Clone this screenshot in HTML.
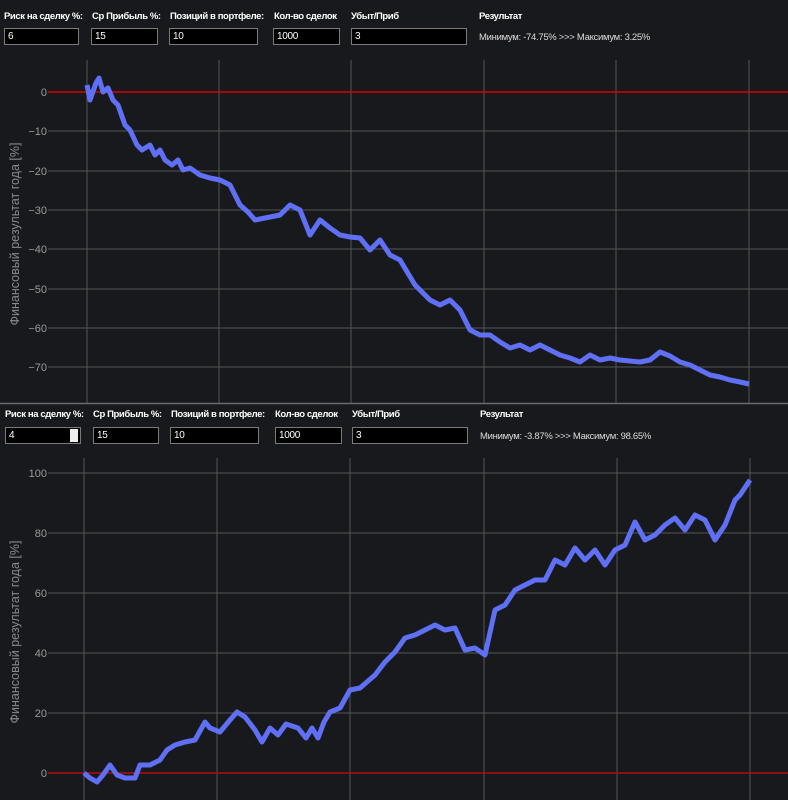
<!DOCTYPE html>
<html><head><meta charset="utf-8"><style>
body{margin:0;width:788px;height:800px;background:#18191d;overflow:hidden;font-family:"Liberation Sans","DejaVu Sans",sans-serif;position:relative}
.l{position:absolute;color:#fff;font-weight:bold;font-size:9.5px;letter-spacing:-0.4px;white-space:nowrap}
.i{position:absolute;background:#000;border:1px solid #7a7a7a;color:#fff;font-size:10px;line-height:15px;padding-left:3px;box-sizing:border-box;height:17px;letter-spacing:-0.3px}
.r{position:absolute;color:#ddd;font-size:9.5px;letter-spacing:-0.3px;white-space:nowrap}
svg{position:absolute;left:0;top:0}
</style></head><body>
<svg width="788" height="800">
<g stroke="#555" stroke-width="1">
<line x1="87" y1="60" x2="87" y2="403"/><line x1="219" y1="60" x2="219" y2="403"/><line x1="351" y1="60" x2="351" y2="403"/><line x1="484" y1="60" x2="484" y2="403"/><line x1="616" y1="60" x2="616" y2="403"/><line x1="749" y1="60" x2="749" y2="403"/>
<line x1="48" y1="131" x2="788" y2="131"/><line x1="48" y1="171" x2="788" y2="171"/><line x1="48" y1="210" x2="788" y2="210"/><line x1="48" y1="249" x2="788" y2="249"/><line x1="48" y1="289" x2="788" y2="289"/><line x1="48" y1="328" x2="788" y2="328"/><line x1="48" y1="367" x2="788" y2="367"/>
<line x1="84" y1="458" x2="84" y2="800"/><line x1="217" y1="458" x2="217" y2="800"/><line x1="350" y1="458" x2="350" y2="800"/><line x1="484" y1="458" x2="484" y2="800"/><line x1="617" y1="458" x2="617" y2="800"/><line x1="750" y1="458" x2="750" y2="800"/>
<line x1="48" y1="473" x2="788" y2="473"/><line x1="48" y1="533" x2="788" y2="533"/><line x1="48" y1="593" x2="788" y2="593"/><line x1="48" y1="653" x2="788" y2="653"/><line x1="48" y1="713" x2="788" y2="713"/>
</g>
<line x1="0" y1="403.5" x2="788" y2="403.5" stroke="#6a6a6a" stroke-width="1.5"/>
<line x1="48" y1="92" x2="788" y2="92" stroke="#e00000" stroke-width="1.5"/>
<line x1="48" y1="773" x2="788" y2="773" stroke="#b01010" stroke-width="1.5"/>
<g fill="#9a9a9a" font-size="11" text-anchor="end">
<text x="47" y="96">0</text><text x="47" y="135">−10</text><text x="47" y="175">−20</text><text x="47" y="214">−30</text><text x="47" y="253">−40</text><text x="47" y="293">−50</text><text x="47" y="332">−60</text><text x="47" y="371">−70</text>
<text x="47" y="477">100</text><text x="47" y="537">80</text><text x="47" y="597">60</text><text x="47" y="657">40</text><text x="47" y="717">20</text><text x="47" y="777">0</text>
</g>
<g fill="#8a8a8a" font-size="12.5" text-anchor="middle">
<text transform="translate(19,234) rotate(-90)">Финансовый результат года [%]</text>
<text transform="translate(19,632) rotate(-90)">Финансовый результат года [%]</text>
</g>
<g fill="none" stroke="#6070f5" stroke-width="5" stroke-linejoin="round">
<polyline points="87,85 90,100 96,83 99,78 103,92 108,88 113,100 118,105 125,125 130,130 137,145 142,150 150,145 155,155 160,150 165,160 172,165 178,160 183,170 190,168 200,175 210,178 220,180 230,185 240,205 248,212 255,220 270,217 280,215 285,210 290,205 300,210 310,235 320,220 330,228 340,235 350,237 360,238 370,250 380,240 390,255 400,260 415,285 430,300 440,305 450,300 460,310 470,330 480,335 490,335 500,342 510,348 520,345 530,350 540,345 550,350 560,355 570,358 580,362 590,355 600,360 610,358 620,360 640,362 650,360 660,352 670,356 680,362 690,365 700,370 710,375 720,377 730,380 740,382 749,384"/>
<polyline points="84,773 90,778 97,782 103,775 110,765 117,775 125,778 135,778 140,765 150,765 160,760 167,750 175,745 185,742 195,740 205,722 210,728 220,732 230,720 237,712 245,717 255,730 262,742 270,728 278,735 286,724 298,728 306,738 312,728 318,738 324,722 330,712 340,708 350,690 360,688 375,675 385,662 395,652 405,638 415,635 425,630 435,625 445,630 455,628 465,650 475,648 485,655 495,610 505,605 515,590 525,585 535,580 545,580 555,560 565,565 575,548 585,560 595,550 605,565 615,550 625,545 635,522 645,540 655,535 665,525 675,518 685,530 695,515 705,520 715,540 725,525 735,500 740,495 750,480"/>
</g>
</svg>
<div class="l" style="left:4px;top:11px">Риск на сделку %:</div>
<div class="l" style="left:92px;top:11px">Ср Прибыль %:</div>
<div class="l" style="left:170px;top:11px">Позиций в портфеле:</div>
<div class="l" style="left:274px;top:11px">Кол-во сделок</div>
<div class="l" style="left:351px;top:11px">Убыт/Приб</div>
<div class="l" style="left:479px;top:11px">Результат</div>
<div class="i" style="left:4px;top:28px;width:75px">6</div>
<div class="i" style="left:91px;top:28px;width:67px">15</div>
<div class="i" style="left:169px;top:28px;width:89px">10</div>
<div class="i" style="left:273px;top:28px;width:67px">1000</div>
<div class="i" style="left:351px;top:28px;width:116px">3</div>
<div class="r" style="left:479px;top:32px">Минимум: -74.75% &gt;&gt;&gt; Максимум: 3.25%</div>
<div class="l" style="left:5px;top:409px">Риск на сделку %:</div>
<div class="l" style="left:93px;top:409px">Ср Прибыль %:</div>
<div class="l" style="left:171px;top:409px">Позиций в портфеле:</div>
<div class="l" style="left:275px;top:409px">Кол-во сделок</div>
<div class="l" style="left:352px;top:409px">Убыт/Приб</div>
<div class="l" style="left:480px;top:409px">Результат</div>
<div class="i" style="left:5px;top:427px;width:76px">4<span style="position:absolute;right:2px;top:1px;width:8px;height:13px;background:#eee"></span></div>
<div class="i" style="left:93px;top:427px;width:66px">15</div>
<div class="i" style="left:170px;top:427px;width:89px">10</div>
<div class="i" style="left:275px;top:427px;width:67px">1000</div>
<div class="i" style="left:352px;top:427px;width:116px">3</div>
<div class="r" style="left:480px;top:431px">Минимум: -3.87% &gt;&gt;&gt; Максимум: 98.65%</div>
</body></html>
